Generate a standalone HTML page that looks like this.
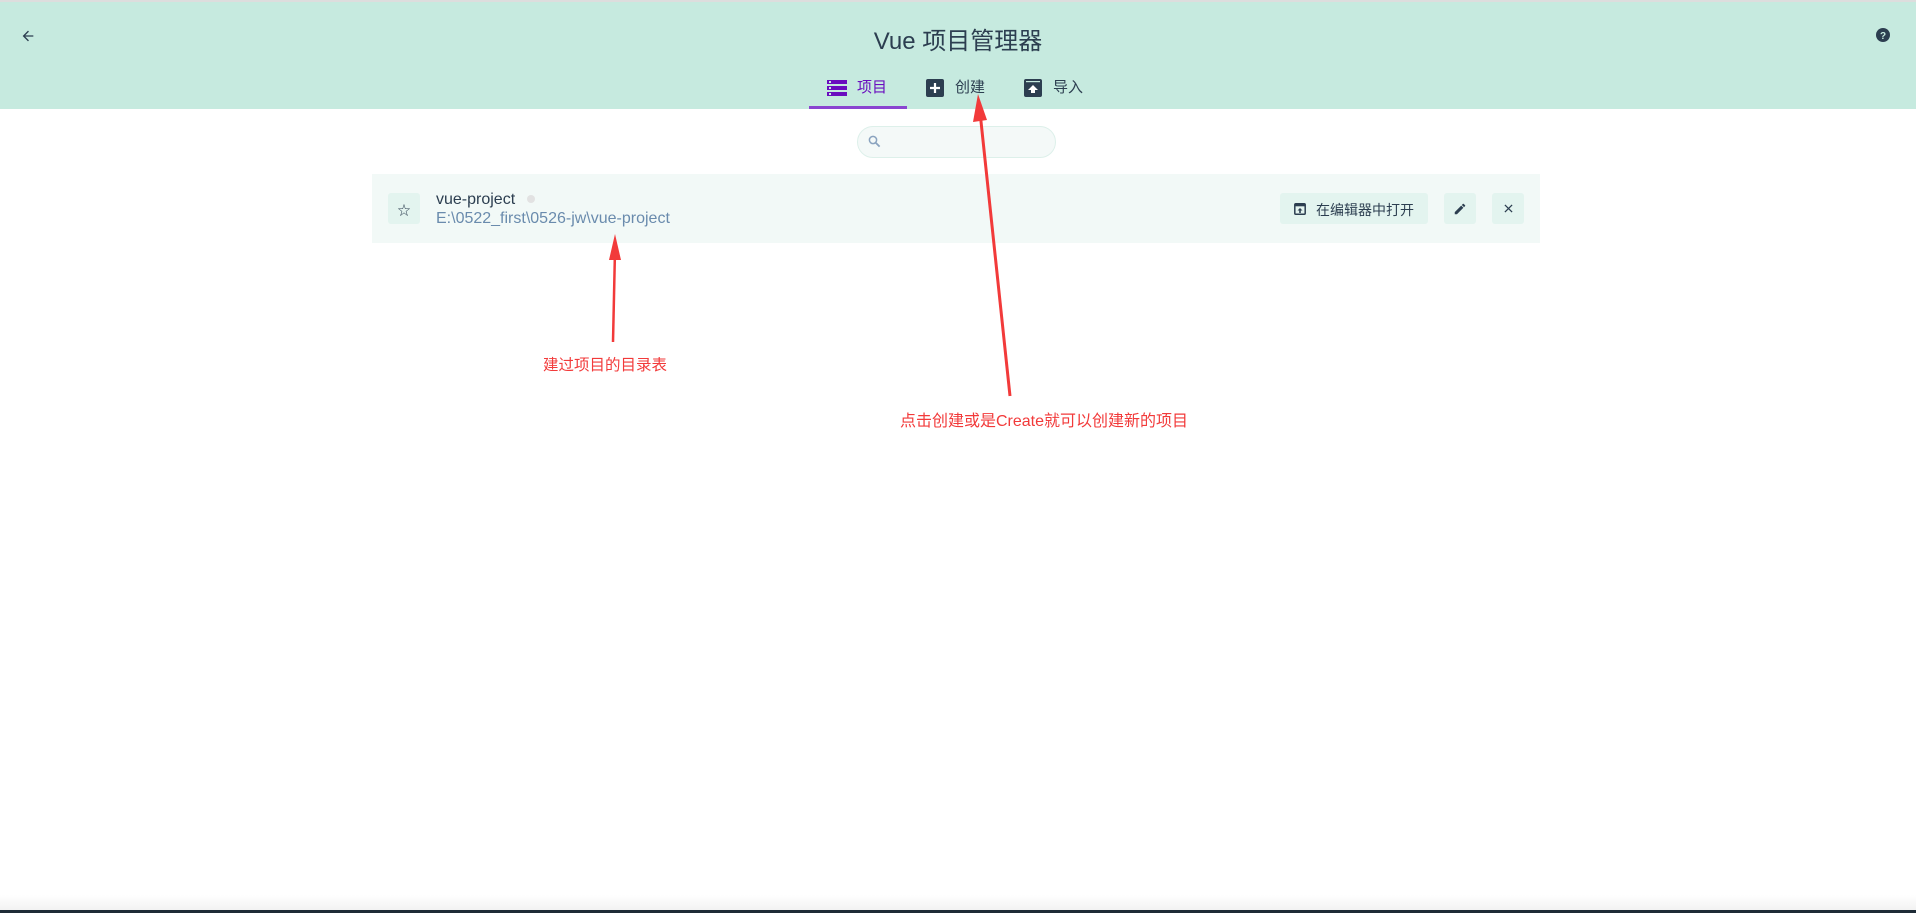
<!DOCTYPE html>
<html><head><meta charset="utf-8"><style>
*{margin:0;padding:0;box-sizing:border-box}
body{width:1916px;height:913px;overflow:hidden;background:#fff;position:relative;font-family:"Liberation Sans","Noto Sans CJK SC",sans-serif;color:#2c3e50}
.abs{position:absolute}
#hdr{left:0;top:0;width:1916px;height:109px;background:#c6eadf;border-top:2px solid #ddd}
.title{left:0;width:1916px;top:21px;text-align:center;font-size:24px;color:#2c3e50}
.tab{top:78px;font-size:15px;line-height:20px}
.btn{background:#e3f4ef;border-radius:3px}
.red{color:#f23a3a;font-size:15.5px;white-space:nowrap}
</style></head><body>
<div id="hdr" class="abs"></div>
<svg class="abs" style="left:20px;top:28px" width="16" height="16" viewBox="0 0 24 24"><path d="M20 11H7.8l5.6-5.6L12 4l-8 8 8 8 1.4-1.4L7.8 13H20z" fill="#2c3e50"/></svg>
<div class="abs title">Vue 项目管理器</div>
<svg class="abs" style="left:1876px;top:28px" width="14" height="14" viewBox="0 0 14 14"><circle cx="7" cy="7" r="7" fill="#2c3e50"/><text x="7" y="11" font-size="10" font-weight="bold" fill="#c6eadf" text-anchor="middle" font-family="Liberation Sans">?</text></svg>
<svg class="abs" style="left:827px;top:80px" width="20" height="16" viewBox="0 0 20 16"><rect x="0" y="0" width="20" height="4" fill="#6a0dbf"/><rect x="0" y="6" width="20" height="4" fill="#6a0dbf"/><rect x="0" y="12" width="20" height="4" fill="#6a0dbf"/><rect x="2" y="1" width="2" height="2" fill="#c6eadf"/><rect x="2" y="7" width="2" height="2" fill="#c6eadf"/><rect x="2" y="13" width="2" height="2" fill="#c6eadf"/></svg>
<div class="abs tab" style="left:857px;color:#6a0dbf">项目</div>
<div class="abs" style="left:809px;top:106px;width:98px;height:3px;background:#8a45d0"></div>
<svg class="abs" style="left:926px;top:79px" width="18" height="18" viewBox="0 0 18 18"><rect width="18" height="18" rx="2" fill="#2c3e50"/><path d="M9 4v10M4 9h10" stroke="#fff" stroke-width="2.2"/></svg>
<div class="abs tab" style="left:955px">创建</div>
<svg class="abs" style="left:1024px;top:79px" width="18" height="18" viewBox="0 0 18 18"><rect width="18" height="18" rx="2" fill="#2c3e50"/><rect x="2" y="2" width="14" height="1.2" fill="#c6eadf"/><path d="M9 6l-5 5h3v3h4v-3h3z" fill="#fff"/></svg>
<div class="abs tab" style="left:1053px">导入</div>
<div class="abs" style="left:857px;top:126px;width:199px;height:32px;border:1px solid #ddf0ea;border-radius:16px;background:#f4f9f8"></div>
<svg class="abs" style="left:868px;top:135px" width="13" height="13" viewBox="0 0 13 13"><circle cx="5" cy="5" r="3.6" fill="none" stroke="#8aa3bf" stroke-width="1.5"/><path d="M7.6 7.6l4 4" stroke="#8aa3bf" stroke-width="1.8"/></svg>
<div class="abs" style="left:372px;top:174px;width:1168px;height:69px;background:#f2f9f7"></div>
<div class="abs btn" style="left:388px;top:193px;width:32px;height:31px"></div>
<div class="abs" style="left:388px;top:200px;width:32px;text-align:center;font-size:13px;color:#2c3e50">☆</div>
<div class="abs" style="left:436px;top:191px;font-size:16px;color:#2c3e50">vue-project</div>
<div class="abs" style="left:527px;top:195px;width:8px;height:8px;border-radius:50%;background:#e2e2e2"></div>
<div class="abs" style="left:436px;top:210px;font-size:16px;color:#6a8bad">E:\0522_first\0526-jw\vue-project</div>
<div class="abs btn" style="left:1280px;top:193px;width:148px;height:31px"></div>
<svg class="abs" style="left:1294px;top:203px" width="12" height="12" viewBox="0 0 12 12"><rect x="0.8" y="0.8" width="10.4" height="10.4" rx="1" fill="none" stroke="#2c3e50" stroke-width="1.5"/><rect x="0.8" y="0.8" width="10.4" height="2.5" fill="#2c3e50"/><path d="M6 5l-2.5 2.5h1.7V10h1.6V7.5h1.7z" fill="#2c3e50"/></svg>
<div class="abs" style="left:1316px;top:200px;font-size:14px">在编辑器中打开</div>
<div class="abs btn" style="left:1444px;top:193px;width:32px;height:31px"></div>
<svg class="abs" style="left:1453px;top:202px" width="14" height="14" viewBox="0 0 24 24"><path d="M3 17.25V21h3.75L17.8 9.94l-3.75-3.75zM20.7 7.04a1 1 0 000-1.41l-2.34-2.34a1 1 0 00-1.41 0l-1.83 1.83 3.75 3.75z" fill="#2c3e50"/></svg>
<div class="abs btn" style="left:1492px;top:193px;width:32px;height:31px"></div>
<svg class="abs" style="left:1504px;top:204px" width="9" height="9" viewBox="0 0 10 10"><path d="M1 1l8 8M9 1l-8 8" stroke="#2c3e50" stroke-width="1.4"/></svg>
<svg class="abs" style="left:0;top:0" width="1916" height="913">
<path d="M613 342 L615 250" stroke="#f23a3a" stroke-width="2.5"/>
<path d="M615 234 L609 260 L621 260 Z" fill="#f23a3a"/>
<path d="M1010 396 L980 112" stroke="#f23a3a" stroke-width="3"/>
<path d="M978 94 L973 122 L987 120 Z" fill="#f23a3a"/>
</svg>
<div class="abs red" style="left:543px;top:353px">建过项目的目录表</div>
<div class="abs red" style="left:900px;top:407px;font-size:16px">点击创建或是Create就可以创建新的项目</div>
<div class="abs" style="left:0;top:895px;width:1916px;height:15px;background:linear-gradient(#fff,#f2f2f2)"></div>
<div class="abs" style="left:0;top:910px;width:1916px;height:3px;background:#1e2b36"></div>
</body></html>
